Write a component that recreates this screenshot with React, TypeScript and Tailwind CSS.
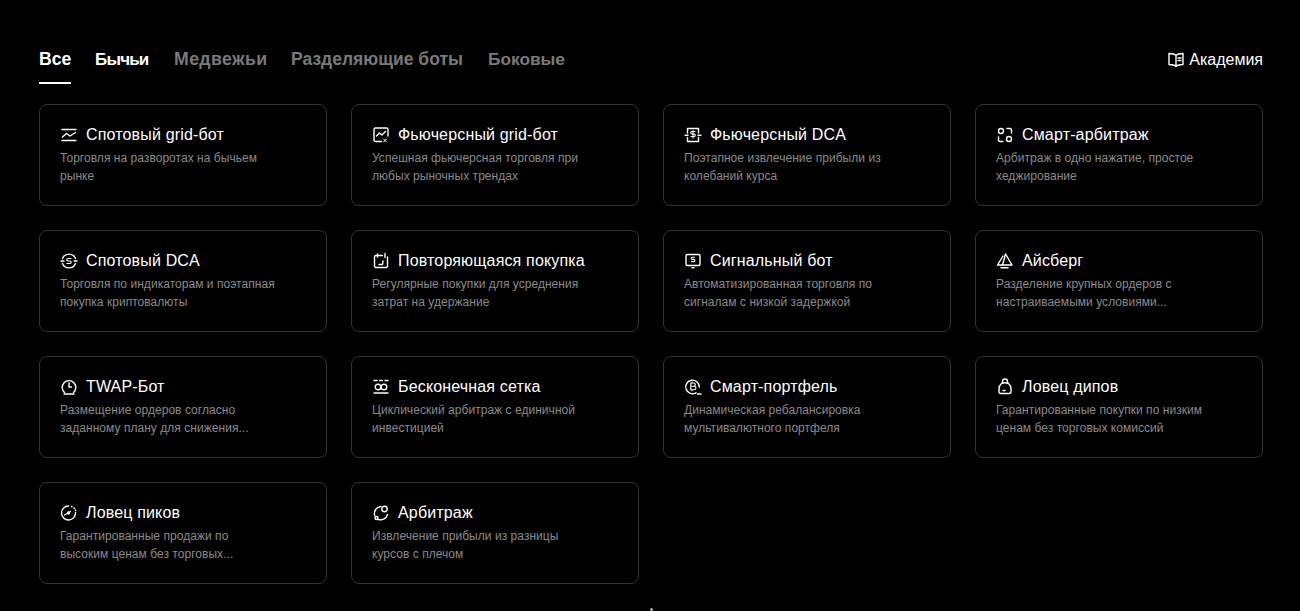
import React from "react";

const S = { fill: "none", stroke: "currentColor", strokeWidth: 1.4, strokeLinecap: "round" as const, strokeLinejoin: "round" as const };
const Ic = ({ children }: { children: React.ReactNode }) => (
  <svg width="18" height="18" viewBox="0 0 18 18" className="shrink-0 text-white" {...S}>{children}</svg>
);

const icons: Record<string, React.ReactNode> = {
  spotGrid: <Ic><path d="M2 3.500h14M2 14.500h14" /><path d="M2.500 11l4-3.500 3.500 2.500 5.500-3.500" /></Ic>,
  futGrid: <Ic><path d="M9.500 15.500H3.500a1.500 1.500 0 0 1-1.500-1.500V3.500a1.500 1.500 0 0 1 1.500-1.500h11a1.500 1.500 0 0 1 1.500 1.500v6.500" /><path d="M4.500 10l3-3 2.500 2 3.500-3.500" /><path d="M11.500 13l3 3M14.500 13l-3 3" strokeWidth="1" /></Ic>,
  futDca: <Ic><path d="M3.500 7V2.500h11V7M3.500 11.500v4h11v-4" /><path d="M1 9.200h3M14 9.200h3" /><path d="M11 5.500H8a1 1 0 0 0 0 2.500h2a1 1 0 0 1 0 2.500H7M9 4.500v7.500" strokeWidth="1.100" /></Ic>,
  smartArb: <Ic><circle cx="5" cy="5" r="2.500" /><circle cx="13" cy="13" r="2.500" /><path d="M11 2.500h3a1.500 1.500 0 0 1 1.500 1.500v3M7 15.500H4A1.500 1.500 0 0 1 2.500 14v-3" /></Ic>,
  spotDca: <Ic><path d="M2.500 6.500A7 7 0 0 1 15.500 6.500M2.500 11.500A7 7 0 0 0 15.500 11.500" /><path d="M1 9h3M14 9h3" /><path d="M11 6.500H8a1.200 1.200 0 0 0 0 2.500h2a1.200 1.200 0 0 1 0 2.500H7" strokeWidth="1.100" /></Ic>,
  recurring: <Ic><path d="M10.500 3.500H4A1.500 1.500 0 0 0 2.500 5v9A1.500 1.500 0 0 0 4 15.500h10a1.500 1.500 0 0 0 1.500-1.500V5" /><path d="M5.500 2v3M13 1.500v4" /><path d="M7 12.500h3.500l.5-3.500" /></Ic>,
  signal: <Ic><rect x="2" y="2.500" width="14" height="11" rx="1.500" /><path d="M8 15.800h2" /><path d="M10.500 5.200H8.200a.900.900 0 0 0 0 2.200h1.600a.900.900 0 0 1 0 2.200H7.500" strokeWidth="1.100" /></Ic>,
  iceberg: <Ic><path d="M7 4L1.500 13H6.500" /><path d="M9.500 2l6.500 11H6.500L9.500 2z" /><path d="M5 15.800h7" /></Ic>,
  twap: <Ic><path d="M4.500 14.500a6.800 6.800 0 1 1 9 0" /><path d="M9 5v4h2.500" /><path d="M4 16h10" /></Ic>,
  infinite: <Ic><path d="M2 2.500h3M13 2.500h3M7.500 2.500h3" /><circle cx="6" cy="9" r="2.800" /><circle cx="12" cy="9" r="2.800" /><path d="M2 15h14" /></Ic>,
  portfolio: <Ic><path d="M12 14.800A6.800 6.800 0 1 1 15.300 9" /><path d="M6.800 5h3a1.500 1.500 0 0 1 0 3.200h-3zM6.800 8.200h3.400a1.700 1.700 0 0 1 0 3.500H6.800zM8 4v1M8 11.700v1" strokeWidth="1.100" /><path d="M13.500 16h3.500" /></Ic>,
  dip: <Ic><path d="M6.500 5V3.500a2.500 2.500 0 0 1 5 0V5" /><path d="M5.500 5.500Q9 4 12.500 5.500Q15 7.500 15 11v2.500a2 2 0 0 1-2 2H5a2 2 0 0 1-2-2V11Q3 7.500 5.500 5.500z" /><path d="M7 12.500h2" /></Ic>,
  peak: <Ic><path d="M15.500 8.500a7 7 0 1 1-7-6.500" /><path d="M4.500 11l6-3.500" /><circle cx="8.500" cy="9" r="1" /><path d="M11.500 2.500l.5.300M14 4l.5.500M15.500 6l.2.500" /></Ic>,
  arb: <Ic><path d="M9 2.500A7 7 0 0 0 2.700 11.500M6.500 15.500a7 7 0 0 0 9-5" /><circle cx="12.500" cy="5" r="2.700" /><circle cx="4.500" cy="14" r="1.500" /></Ic>,
};

const cards = [
  ["spotGrid", "Спотовый grid-бот", "Торговля на разворотах на бычьем", "рынке"],
  ["futGrid", "Фьючерсный grid-бот", "Успешная фьючерсная торговля при", "любых рыночных трендах"],
  ["futDca", "Фьючерсный DCA", "Поэтапное извлечение прибыли из", "колебаний курса"],
  ["smartArb", "Смарт-арбитраж", "Арбитраж в одно нажатие, простое", "хеджирование"],
  ["spotDca", "Спотовый DCA", "Торговля по индикаторам и поэтапная", "покупка криптовалюты"],
  ["recurring", "Повторяющаяся покупка", "Регулярные покупки для усреднения", "затрат на удержание"],
  ["signal", "Сигнальный бот", "Автоматизированная торговля по", "сигналам с низкой задержкой"],
  ["iceberg", "Айсберг", "Разделение крупных ордеров с", "настраиваемыми условиями..."],
  ["twap", "TWAP-Бот", "Размещение ордеров согласно", "заданному плану для снижения..."],
  ["infinite", "Бесконечная сетка", "Циклический арбитраж с единичной", "инвестицией"],
  ["portfolio", "Смарт-портфель", "Динамическая ребалансировка", "мультивалютного портфеля"],
  ["dip", "Ловец дипов", "Гарантированные покупки по низким", "ценам без торговых комиссий"],
  ["peak", "Ловец пиков", "Гарантированные продажи по", "высоким ценам без торговых..."],
  ["arb", "Арбитраж", "Извлечение прибыли из разницы", "курсов с плечом"],
];

export default function App() {
  return (
    <div className="relative h-[611px] overflow-hidden bg-black text-white font-['Liberation_Sans',sans-serif]">
      <div className="w-[1224px] ml-[39px] pt-[40px]">
        <div className="flex justify-between h-[44px]">
          <div className="flex gap-6 text-[17.7px] font-bold whitespace-nowrap">
            <div className="h-[44px] w-[32px] leading-[38px] border-b-2 border-white">Все</div>
            <div className="w-[55px] leading-[39px] text-[17px] tracking-[-0.8px]">Бычьи</div>
            <div className="w-[93px] leading-[38px] tracking-[0.4px] text-[#7a7a7a]">Медвежьи</div>
            <div className="w-[173px] leading-[38px] text-[17.5px] text-[#7a7a7a]">Разделяющие боты</div>
            <div className="w-[76px] leading-[38px] text-[17.3px] text-[#7a7a7a]">Боковые</div>
          </div>
          <div className="flex items-center gap-[4px] h-[39px] text-[16px]">
            <svg width="18" height="18" viewBox="0 0 18 18" {...S}>
              <path d="M9 4.500C7.500 3 5 2.500 2 2.500v11c3 0 5.500.500 7 2 1.500-1.500 4-2 7-2v-11c-3 0-5.500.500-7 2zM9 4.500v11" />
              <path d="M11 7h3M11 9.500h3" />
            </svg>
            Академия
          </div>
        </div>
        <div className="grid grid-cols-4 gap-6 mt-[20px]">
          {cards.map(([icon, title, l1, l2]) => (
            <div key={title} className="h-[102px] border border-[#333333] rounded-lg pt-[20px] px-[20px]">
              <div className="flex items-center gap-[8px] h-[20px] text-[16px] leading-[20px] tracking-[0.16px] text-white">
                {icons[icon]}
                {title}
              </div>
              <div className="mt-[4px] text-[12px] leading-[18px] tracking-[0.04px] text-[#8a8a8a]">
                <div>{l1}</div>
                <div>{l2}</div>
              </div>
            </div>
          ))}
        </div>
      </div>
      <div className="absolute left-[650px] top-[608px] w-[3px] h-[3px] rounded-full bg-[#aaaaaa]" />
    </div>
  );
}
